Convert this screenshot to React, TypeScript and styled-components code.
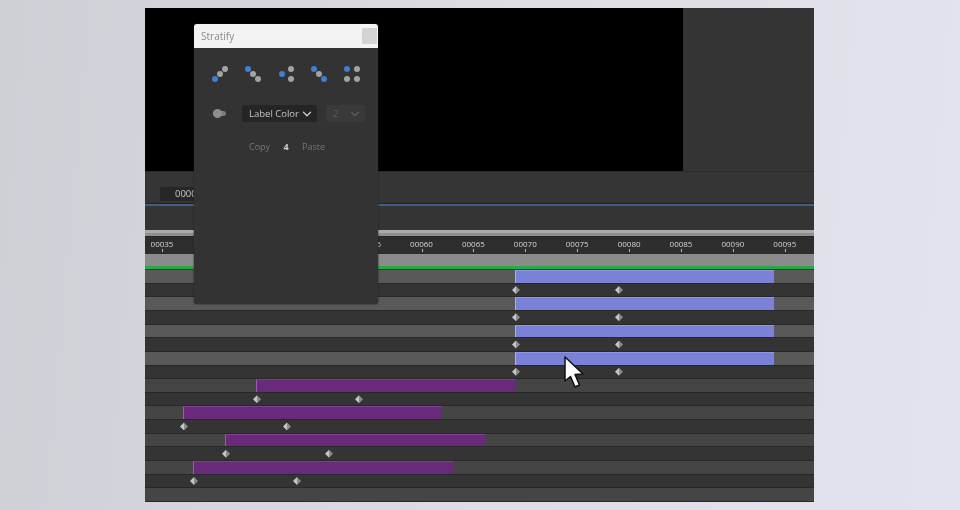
import React from 'react'
import styled, { createGlobalStyle } from 'styled-components'
import { ChevronDown } from 'lucide-react'

const GlobalStyle = createGlobalStyle`
    html, body {
        margin: 0;
        padding: 0;
        width: 960px;
        height: 510px;
        overflow: hidden;
        font-family: "Open Sans", "Liberation Sans", sans-serif;
    }
`

const Page = styled.div`
    width: 960px;
    height: 510px;
    box-sizing: border-box;
    padding: 8px 146px 8px 145px;
    background: linear-gradient(95deg, #cfcfd6 0%, #d2d2da 15%, #dcdce4 50%, #e0e1ea 85%, #e2e3ec 100%);
`

const Editor = styled.div`
    position: relative;
    width: 669px;
    height: 494px;
    display: flex;
    flex-direction: column;
    background: #333333;
    filter: blur(0.35px);
`

const MonitorRow = styled.div`
    display: flex;
    height: 163px;
    flex: none;
`

const Monitor = styled.div`
    width: 538px;
    background: #000000;
`

const SideArea = styled.div`
    flex: 1;
    background: #343434;
`

const ToolRow = styled.div`
    height: 35px;
    flex: none;
    box-sizing: border-box;
    padding: 15px 0 0 15px;
    background: #353535;
    border-top: 1px solid #2b2b2b;
    border-bottom: 2px solid #3f5f86;
    box-shadow: inset 0 -1px 0 #242424;
`

const TimeBox = styled.div`
    width: 60px;
    height: 14px;
    padding-left: 15px;
    background: #272727;
    color: #c8c8c8;
    font-size: 9.5px;
    line-height: 14px;
`

const EmptyRow = styled.div`
    height: 24px;
    flex: none;
    background: #343434;
`

const ScrollBar = styled.div`
    height: 7px;
    flex: none;
    box-sizing: border-box;
    background: #8f8f8f;
    border-top: 3px solid #ababab;
    border-bottom: 1px solid #262626;
`

const Ruler = styled.div`
    position: relative;
    height: 17px;
    flex: none;
    background: #2e2e2e;
`

const RulerLabel = styled.span`
    position: absolute;
    top: 0;
    transform: translateX(-50%);
    color: #d4d4d4;
    font-size: 8px;
    line-height: 13px;
`

const RulerTick = styled.i`
    position: absolute;
    top: 12px;
    width: 1px;
    height: 3px;
    background: #b8b8b8;
`

const WorkArea = styled.div`
    height: 12px;
    flex: none;
    background: #8b8b8b;
`

const GreenLine = styled.div`
    height: 3px;
    flex: none;
    background: #2ba846;
    box-shadow: 0 1px 0 #1f4a2a;
`

const Tracks = styled.div`
    flex: 1;
    padding-top: 1px;
    display: grid;
    grid-template-rows: repeat(17, 1fr);
`

const Track = styled.div<{ $tone: 'light' | 'mid' | 'dark' }>`
    position: relative;
    box-sizing: border-box;
    border-bottom: 1px solid #282828;
    background: ${p => (p.$tone === 'light' ? '#595959' : p.$tone === 'mid' ? '#454545' : '#343434')};
`

const Clip = styled.div<{ $kind: 'blue' | 'purple' }>`
    position: absolute;
    top: 0;
    bottom: 0;
    box-sizing: border-box;
    background: ${p => (p.$kind === 'blue' ? '#7a82d8' : '#6a2a7c')};
    border-left: 1px solid ${p => (p.$kind === 'blue' ? '#aab0e8' : '#94609f')};
    border-top: 1px solid ${p => (p.$kind === 'blue' ? '#8f96e2' : '#7d4190')};
`

const Key = styled.i`
    position: absolute;
    top: 50%;
    width: 8px;
    height: 8px;
    margin: -4px 0 0 -4px;
    background: linear-gradient(90deg, #c6c6c6 50%, #8c8c8c 50%);
    clip-path: polygon(50% 0, 100% 50%, 50% 100%, 0 50%);
`

const Panel = styled.div`
    position: absolute;
    left: 49px;
    top: 16px;
    width: 184px;
    height: 280px;
    display: flex;
    flex-direction: column;
    border-radius: 3px;
    overflow: hidden;
    background: #333333;
    box-shadow: 0 0 2px #1c1c1c;
`

const TitleBar = styled.div`
    height: 24px;
    flex: none;
    display: flex;
    align-items: center;
    justify-content: space-between;
    padding: 0 1px 0 7px;
    background: #f3f3f3;
    color: #8a8a8a;
    font-size: 10px;
`

const CloseBox = styled.div`
    width: 15px;
    height: 16px;
    background: #d4d4d4;
`

const IconRow = styled.div`
    display: flex;
    gap: 13px;
    margin-top: 16px;
    padding-left: 16px;
`

const ControlRow = styled.div`
    display: flex;
    align-items: center;
    margin-top: 21px;
    padding-left: 19px;
`

const Toggle = styled.div`
    position: relative;
    width: 13px;
    height: 5px;
    margin-right: 16px;
    border-radius: 3px;
    background: #7c7c7c;

    &::before {
        content: '';
        position: absolute;
        left: 0;
        top: -2px;
        width: 9px;
        height: 9px;
        border-radius: 50%;
        background: #8e8e8e;
    }
`

const Select = styled.div<{ $disabled?: boolean }>`
    display: flex;
    align-items: center;
    justify-content: space-between;
    box-sizing: border-box;
    width: ${p => (p.$disabled ? 39 : 75)}px;
    height: 17px;
    margin-right: 9px;
    padding: 0 3px 0 7px;
    border-radius: 2px;
    background: ${p => (p.$disabled ? '#3a3a3a' : '#252525')};
    color: ${p => (p.$disabled ? '#5e5e5e' : '#c4c4c4')};
    font-size: 9.5px;
`

const CopyRow = styled.div`
    display: flex;
    margin-top: 18px;
    padding-left: 55px;
    color: #777777;
    font-size: 9px;
    line-height: 14px;
`

const Count = styled.span`
    width: 32px;
    text-align: center;
    color: #d0d0d0;
    font-weight: 700;
`

const Pointer = styled.svg`
    position: absolute;
    left: 416px;
    top: 346px;
`

const BLUE = '#3f7fd6'
const GREY = '#a3a3a3'

// dots for the five distribution buttons, as [x, y, colour]
const stratifyIcons: [number, number, string][][] = [
    [[5, 15, BLUE], [10, 10, GREY], [15, 5, GREY]],
    [[5, 5, BLUE], [10, 10, GREY], [15, 15, GREY]],
    [[6, 10, BLUE], [15, 5, GREY], [15, 15, GREY]],
    [[5, 5, BLUE], [10, 10, GREY], [15, 15, BLUE]],
    [[5, 5, BLUE], [15, 5, GREY], [5, 15, GREY], [15, 15, GREY]],
]

const rulerStart = 17
const rulerStep = 51.9
const rulerLabels = Array.from({ length: 13 }, (_, i) => String(35 + i * 5).padStart(5, '0'))

type Row = { tone: 'light' | 'mid' | 'dark'; clip?: { kind: 'blue' | 'purple'; left: number; width: number }; keys?: number[] }

const rows: Row[] = [
    { tone: 'light', clip: { kind: 'blue', left: 370, width: 259 } },
    { tone: 'dark', keys: [371, 474] },
    { tone: 'light', clip: { kind: 'blue', left: 370, width: 259 } },
    { tone: 'dark', keys: [371, 474] },
    { tone: 'light', clip: { kind: 'blue', left: 370, width: 259 } },
    { tone: 'dark', keys: [371, 474] },
    { tone: 'light', clip: { kind: 'blue', left: 370, width: 259 } },
    { tone: 'dark', keys: [371, 474] },
    { tone: 'mid', clip: { kind: 'purple', left: 111, width: 259 } },
    { tone: 'dark', keys: [112, 214] },
    { tone: 'mid', clip: { kind: 'purple', left: 38, width: 259 } },
    { tone: 'dark', keys: [39, 142] },
    { tone: 'mid', clip: { kind: 'purple', left: 80, width: 260 } },
    { tone: 'dark', keys: [81, 184] },
    { tone: 'mid', clip: { kind: 'purple', left: 48, width: 260 } },
    { tone: 'dark', keys: [49, 152] },
    { tone: 'mid' },
]

const App: React.FunctionComponent = () => {
    return (
        <>
            <GlobalStyle />
            <Page>
                <Editor>
                    <MonitorRow>
                        <Monitor />
                        <SideArea />
                    </MonitorRow>
                    <ToolRow>
                        <TimeBox>00000</TimeBox>
                    </ToolRow>
                    <EmptyRow />
                    <ScrollBar />
                    <Ruler>
                        {rulerLabels.map((label, i) => (
                            <React.Fragment key={label}>
                                <RulerLabel style={{ left: rulerStart + i * rulerStep }}>{label}</RulerLabel>
                                <RulerTick style={{ left: rulerStart + i * rulerStep }} />
                            </React.Fragment>
                        ))}
                    </Ruler>
                    <WorkArea />
                    <GreenLine />
                    <Tracks>
                        {rows.map((row, index) => (
                            <Track key={index} $tone={row.tone}>
                                {row.clip && (
                                    <Clip $kind={row.clip.kind} style={{ left: row.clip.left, width: row.clip.width }} />
                                )}
                                {row.keys?.map(x => <Key key={x} style={{ left: x }} />)}
                            </Track>
                        ))}
                    </Tracks>

                    <Panel>
                        <TitleBar>
                            Stratify
                            <CloseBox />
                        </TitleBar>
                        <IconRow>
                            {stratifyIcons.map((dots, i) => (
                                <svg key={i} width="20" height="20" viewBox="0 0 20 20">
                                    {dots.map(([cx, cy, fill]) => (
                                        <circle key={`${cx}-${cy}`} cx={cx} cy={cy} r="3" fill={fill} />
                                    ))}
                                </svg>
                            ))}
                        </IconRow>
                        <ControlRow>
                            <Toggle />
                            <Select>
                                Label Color
                                <ChevronDown size={14} color="#d0d0d0" strokeWidth={2.2} />
                            </Select>
                            <Select $disabled>
                                2
                                <ChevronDown size={14} color="#5e5e5e" strokeWidth={2.2} />
                            </Select>
                        </ControlRow>
                        <CopyRow>
                            Copy
                            <Count>4</Count>
                            Paste
                        </CopyRow>
                    </Panel>

                    <Pointer width="24" height="36" viewBox="0 0 24 36">
                        <path
                            d="M4 3 L4 27 L9.5 22.5 L14 33 L18.5 31 L14 20.5 L22 20 Z"
                            fill="#ffffff"
                            stroke="#111111"
                            strokeWidth="1.5"
                            strokeLinejoin="round"
                        />
                    </Pointer>
                </Editor>
            </Page>
        </>
    )
}

export default App
